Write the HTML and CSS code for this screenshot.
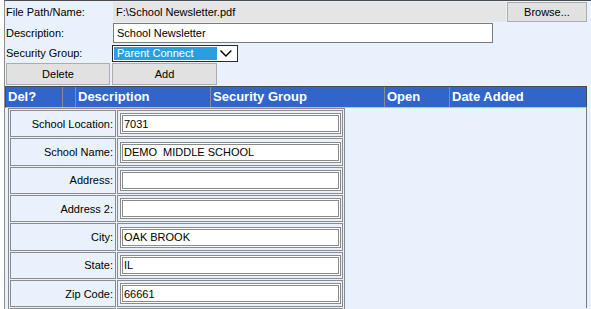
FILE: index.html
```html
<!DOCTYPE html>
<html lang="en">
<head>
    <meta charset="UTF-8">
    <meta name="viewport" content="width=device-width, initial-scale=1.0">
    <title>School Documents</title>
    <link rel="stylesheet" href="styles.css">
</head>
<body>
    <div class="page">
        <div class="fields">
            <div class="row row-file">
                <span class="label">File Path/Name:</span>
                <div class="file-box">F:\School Newsletter.pdf</div>
                <button class="btn browse">Browse...</button>
            </div>
            <div class="row row-desc">
                <span class="label">Description:</span>
                <input type="text" class="text-box" value="School Newsletter">
            </div>
            <div class="row row-group">
                <span class="label">Security Group:</span>
                <div class="select">
                    <span class="selected">Parent Connect</span>
                    <svg class="chevron" width="19" height="13" viewBox="0 0 19 13">
                        <path d="M3.5 3.5 L9 9 L14.5 3.5" fill="none" stroke="#000" stroke-width="1.4"/>
                    </svg>
                </div>
            </div>
            <div class="row row-buttons">
                <button class="btn btn-delete">Delete</button>
                <button class="btn btn-add">Add</button>
            </div>
        </div>

        <!-- document grid header -->
        <div class="grid-head">
            <div class="col col-del">Del?</div>
            <div class="col col-blank"></div>
            <div class="col col-desc">Description</div>
            <div class="col col-group">Security Group</div>
            <div class="col col-open">Open</div>
            <div class="col col-date">Date Added</div>
        </div>

        <div class="grid-body">
            <table class="school-form">
                <tr>
                    <td class="form-label">School Location:</td>
                    <td class="form-field"><input type="text" value="7031"></td>
                </tr>
                <tr>
                    <td class="form-label">School Name:</td>
                    <td class="form-field"><input type="text" value="DEMO  MIDDLE SCHOOL"></td>
                </tr>
                <tr>
                    <td class="form-label">Address:</td>
                    <td class="form-field"><input type="text" value=""></td>
                </tr>
                <tr>
                    <td class="form-label">Address 2:</td>
                    <td class="form-field"><input type="text" value=""></td>
                </tr>
                <tr>
                    <td class="form-label">City:</td>
                    <td class="form-field"><input type="text" value="OAK BROOK"></td>
                </tr>
                <tr>
                    <td class="form-label">State:</td>
                    <td class="form-field"><input type="text" value="IL"></td>
                </tr>
                <tr>
                    <td class="form-label">Zip Code:</td>
                    <td class="form-field"><input type="text" value="66661"></td>
                </tr>
                <tr>
                    <td class="form-label"></td>
                    <td class="form-field"><input type="text" value=""></td>
                </tr>
            </table>
        </div>
    </div>
</body>
</html>
```

FILE: styles.css
```css
body {
    margin: 0;
    background: #fff;
    font-family: "Liberation Sans", Arial, sans-serif;
    font-size: 11px;
    color: #000;
}
.page {
    margin-left: 4px;
    height: 308px;
    overflow: hidden;
    border-left: 1px solid #8d8d8d;
    border-top: 1px solid #4a4a4a;
    background: #e9f2fc;
}
.row {
    display: flex;
    align-items: flex-start;
    margin-top: 1px;
}
.label {
    width: 107px;
    padding-left: 1px;
    box-sizing: border-box;
    line-height: 18px;
}
.row-file {
    height: 20px;
}
.row-file .label {
    line-height: 20px;
}
.file-box {
    margin-left: 1px;
    width: 393px;
    height: 20px;
    padding-left: 3px;
    box-sizing: border-box;
    line-height: 20px;
    background: #e5e5e5;
}
.btn {
    font-family: inherit;
    font-size: 11px;
    color: #000;
    background: #e1e1e1;
    border: 1px solid #adadad;
    padding: 0;
    box-sizing: border-box;
}
.browse {
    margin-left: 1px;
    width: 80px;
    height: 20px;
}
.row-desc {
    height: 21px;
}
.row-desc .label {
    line-height: 20px;
}
.text-box {
    margin: 0 0 0 1px;
    width: 380px;
    height: 20px;
    padding: 0 3px;
    box-sizing: border-box;
    border: 1px solid #7a7a7a;
    background: #fff;
    font-family: inherit;
    font-size: 11px;
    color: #000;
}
.row-group {
    height: 17px;
}
.row-group .label {
    line-height: 17px;
}
.select {
    display: flex;
    width: 126px;
    height: 17px;
    padding: 1px;
    box-sizing: border-box;
    border: 1px solid #2b2b2b;
    background: #fff;
}
.selected {
    width: 104px;
    height: 13px;
    padding-left: 3px;
    box-sizing: border-box;
    line-height: 13px;
    background: #2a9fe0;
    color: #fff;
}
.chevron {
    display: block;
}
.row-buttons {
    height: 23px;
    padding-left: 1px;
}
.btn-delete {
    width: 104px;
    height: 22px;
}
.btn-add {
    margin-left: 2px;
    width: 105px;
    height: 22px;
}
.grid-head {
    display: flex;
    width: 580px;
    height: 20px;
    border: 1px solid #4b4b4b;
    border-bottom: 1px solid #c4c4c4;
    background: #3265c9;
    color: #fff;
    font-size: 13px;
    font-weight: bold;
    line-height: 20px;
}
.col {
    padding-left: 2px;
    box-sizing: border-box;
    white-space: nowrap;
    overflow: hidden;
}
.col + .col {
    border-left: 1px solid #8a8a9a;
}
.col-del { width: 56px; }
.col-blank { width: 13px; }
.col-desc { width: 135px; }
.col-group { width: 174px; }
.col-open { width: 65px; }
.col-date { width: 137px; }
.grid-body {
    width: 581px;
    height: 200px;
    border-right: 1px solid #7a7a7a;
}
.school-form {
    margin-left: 3px;
    border: 1px solid #8a8a8a;
    border-spacing: 1px;
    table-layout: fixed;
}
.school-form td {
    padding: 0;
    border: 1px solid #8c8c8c;
    height: 25.35px;
}
.form-label {
    width: 102px;
    padding-right: 2px !important;
    text-align: right;
}
.form-field {
    width: 221px;
    padding-left: 2px !important;
    padding-right: 1px !important;
}
.form-field input {
    display: block;
    margin: 0;
    width: 221px;
    height: 21px;
    padding: 0 1px;
    box-sizing: border-box;
    border: 3px double #8a8a8a;
    background: #fff;
    font-family: inherit;
    font-size: 11px;
    color: #000;
}
```
